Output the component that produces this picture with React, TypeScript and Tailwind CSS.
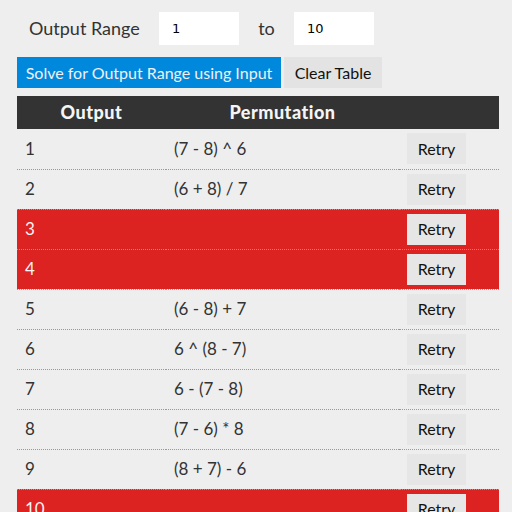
import React from 'react'

interface Row {
  output: number
  perm: string
  failed: boolean
}

const ROWS: Row[] = [
  { output: 1, perm: '(7 - 8) ^ 6', failed: false },
  { output: 2, perm: '(6 + 8) / 7', failed: false },
  { output: 3, perm: '', failed: true },
  { output: 4, perm: '', failed: true },
  { output: 5, perm: '(6 - 8) + 7', failed: false },
  { output: 6, perm: '6 ^ (8 - 7)', failed: false },
  { output: 7, perm: '6 - (7 - 8)', failed: false },
  { output: 8, perm: '(7 - 6) * 8', failed: false },
  { output: 9, perm: '(8 + 7) - 6', failed: false },
  { output: 10, perm: '', failed: true },
]

export default function App() {
  return (
    <div className="min-h-[512px] bg-[#eeeeee] pt-[12px] pl-[17px] text-[#333333] font-['Lato','Noto_Sans',sans-serif] overflow-hidden h-[512px]">
      <div className="flex items-center h-[33px]">
        <span className="w-[142px] pl-[12px] text-[18px]">Output Range</span>
        <input
          defaultValue="1"
          className="w-[80px] h-[33px] bg-white pl-[13px] text-[13px] text-black font-['DejaVu_Sans',sans-serif] outline-none"
        />
        <span className="w-[55px] text-center text-[18px]">to</span>
        <input
          defaultValue="10"
          className="w-[80px] h-[33px] bg-white pl-[13px] text-[13px] text-black font-['DejaVu_Sans',sans-serif] outline-none"
        />
      </div>

      <div className="flex mt-[12px] gap-[3px]">
        <button className="h-[31px] w-[264px] bg-[#0088dd] text-[#f0f0f0] text-[16px]">
          Solve for Output Range using Input
        </button>
        <button className="h-[31px] w-[98px] bg-[#e3e3e3] text-[#111] text-[16px]">
          Clear Table
        </button>
      </div>

      <table className="mt-[8px] w-[482px] border-collapse table-fixed">
        <thead>
          <tr className="bg-[#333333] text-[#f5f5f5] h-[33px]">
            <th className="w-[149px] text-[18px] font-black tracking-[0.5px]">Output</th>
            <th className="w-[233px] text-[18px] font-black tracking-[0.5px]">Permutation</th>
            <th className="w-[100px]"></th>
          </tr>
        </thead>
        <tbody>
          {ROWS.map(r => (
            <tr
              key={r.output}
              className={`h-[40px] text-[17px] ${r.failed ? 'bg-[#dd2222] text-[#f5f5f5]' : ''}`}
            >
              <td className="pl-[8px] border-b border-dotted border-[#999999]">{r.output}</td>
              <td className="pl-[8px] border-b border-dotted border-[#999999]">{r.perm}</td>
              <td className="pl-[8px] border-b border-dotted border-[#999999]">
                <button className="w-[59px] h-[31px] bg-[#e6e6e6] text-[#111] text-[16px] align-middle">
                  Retry
                </button>
              </td>
            </tr>
          ))}
        </tbody>
      </table>
    </div>
  )
}
